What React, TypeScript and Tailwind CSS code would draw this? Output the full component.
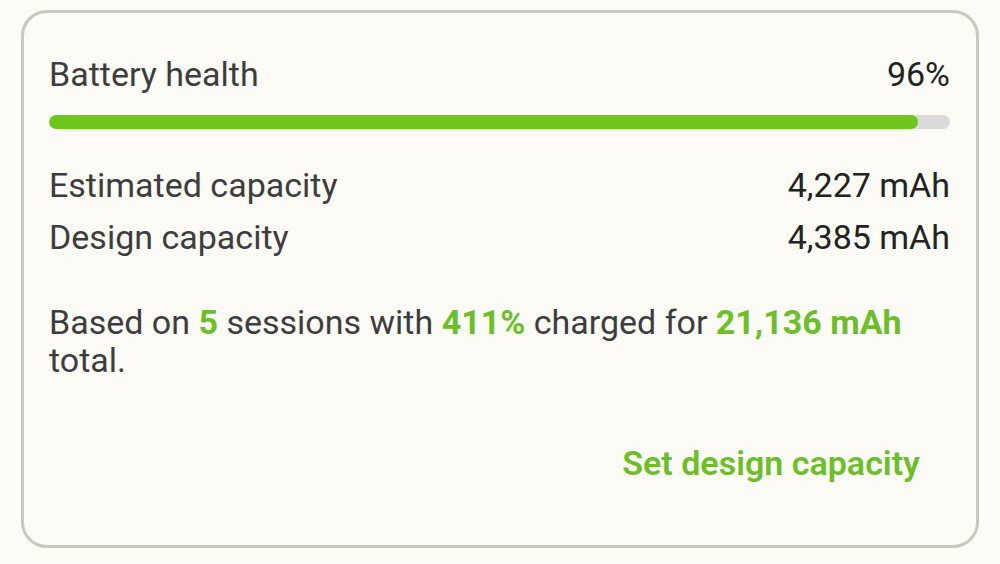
import React from "react";

export default function App() {
  const green = "text-[#6cbf2a]";
  return (
    <div className="w-[1000px] h-[564px] bg-[#fcfbf6] pt-[10px] px-[21px] font-['Roboto',sans-serif]">
      <div className="h-[538px] rounded-[26px] border-[3px] border-[#c9c9bf] bg-[#fcfbf6] pt-[41px] pl-[25px] pr-[26px] flex flex-col">
        <div className="flex justify-between items-center text-[34px] leading-[40px]">
          <span className="text-[#3d3d3f]">Battery health</span>
          <span className="text-[#222]">96%</span>
        </div>
        <div className="mt-[21px] h-[14px] rounded-full bg-[#d9d9d9] overflow-hidden">
          <div className="h-full rounded-full bg-[#6ec51b]" style={{ width: "96.4%" }} />
        </div>
        <div className="mt-[30px] flex flex-col text-[34px] leading-[52px]">
          <div className="flex justify-between">
            <span className="text-[#3d3d3f]">Estimated capacity</span>
            <span className="text-[#222]">4,227 mAh</span>
          </div>
          <div className="flex justify-between">
            <span className="text-[#3d3d3f]">Design capacity</span>
            <span className="text-[#222]">4,385 mAh</span>
          </div>
        </div>
        <p className="mt-[40px] text-[34px] leading-[38px] text-[#3d3d3f]">
          Based on <b className={`font-bold ${green}`}>5</b> sessions with{" "}
          <b className={`font-bold ${green}`}>411%</b> charged for{" "}
          <b className={`font-bold ${green}`}>21,136 mAh</b> total.
        </p>
        <div className="mt-[62px] flex justify-end pr-[30px]">
          <span className={`text-[34px] font-semibold ${green} leading-[44px]`}>Set design capacity</span>
        </div>
      </div>
    </div>
  );
}
